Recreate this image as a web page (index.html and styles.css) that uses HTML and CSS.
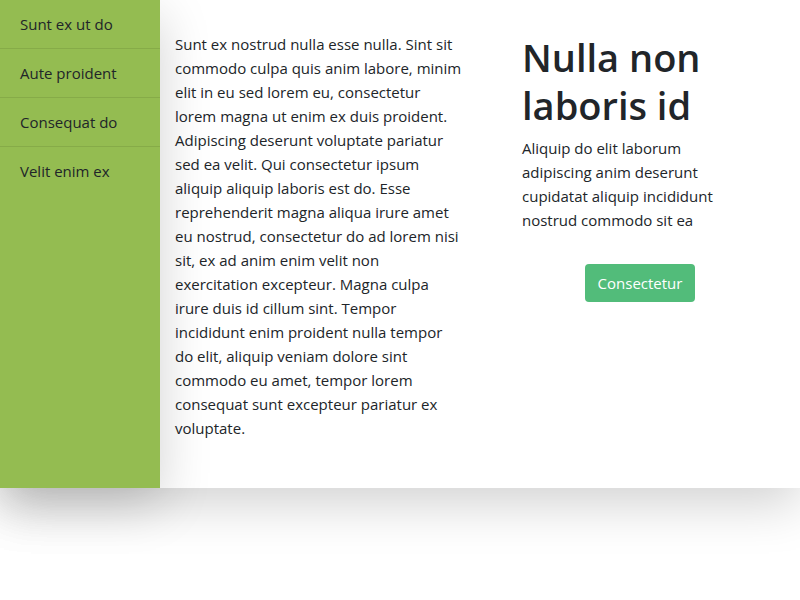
FILE: index.html
```html
<!DOCTYPE html>
<html lang="en">
<head>
<meta charset="utf-8">
<title>Layout</title>
<link rel="stylesheet" href="styles.css">
</head>
<body>
<div class="app">
  <nav class="sidebar">
    <a class="nav-item" href="#">Sunt ex ut do</a>
    <a class="nav-item" href="#">Aute proident</a>
    <a class="nav-item" href="#">Consequat do</a>
    <a class="nav-item last" href="#">Velit enim ex</a>
  </nav>
  <main class="main">
    <section class="col-text">
      <p>Sunt ex nostrud nulla esse nulla. Sint sit commodo culpa quis anim labore, minim elit in eu sed lorem eu, consectetur lorem magna ut enim ex duis proident. Adipiscing deserunt voluptate pariatur sed ea velit. Qui consectetur ipsum aliquip aliquip laboris est do. Esse reprehenderit magna aliqua irure amet eu nostrud, consectetur do ad lorem nisi sit, ex ad anim enim velit non exercitation excepteur. Magna culpa irure duis id cillum sint. Tempor incididunt enim proident nulla tempor do elit, aliquip veniam dolore sint commodo eu amet, tempor lorem consequat sunt excepteur pariatur ex voluptate.</p>
    </section>
    <section class="col-hero">
      <h1>Nulla non laboris id</h1>
      <p>Aliquip do elit laborum adipiscing anim deserunt cupidatat aliquip incididunt nostrud commodo sit ea</p>
      <div class="actions"><button class="btn">Consectetur</button></div>
    </section>
  </main>
</div>
</body>
</html>
```
FILE: styles.css
```css
* { box-sizing: border-box; }
html, body { margin: 0; padding: 0; background: #fff; }
body {
  min-height: 600px;
  font-family: "Open Sans", "Noto Sans", sans-serif;
  font-size: 15px;
  line-height: 24px;
  color: #212529;
}
.app {
  display: flex;
  height: 488px;
  box-shadow: 0 16px 48px rgba(0, 0, 0, 0.18);
  position: relative;
}
.sidebar {
  width: 160px;
  flex: none;
  background: #94bc51;
  display: flex;
  flex-direction: column;
  box-shadow: 0 16px 48px rgba(0, 0, 0, 0.18);
  position: relative;
  z-index: 1;
}
.nav-item {
  display: block;
  padding: 12px 20px;
  color: #212529;
  text-decoration: none;
  border-bottom: 1px solid #86ab48;
}
.nav-item.last { border-bottom: none; }
.main {
  flex: 1;
  display: grid;
  grid-template-columns: 320px 320px;
  background: #fff;
}
.col-text { padding: 32px 18px 0 15px; }
.col-text p { margin: 0; }
.col-hero { padding: 33px 42px 0 42px; }
.col-hero h1 {
  margin: 0 0 7px 0;
  font-size: 38px;
  line-height: 48px;
  font-weight: 600;
  color: #212529;
}
.col-hero p { margin: 0; max-width: 200px; }
.actions {
  display: flex;
  justify-content: center;
  margin-top: 32px;
}
.btn {
  font: inherit;
  font-size: 15px;
  color: #fff;
  background: #52bc7a;
  border: none;
  border-radius: 4px;
  height: 38px;
  padding: 0 13px;
  line-height: 24px;
}
```
